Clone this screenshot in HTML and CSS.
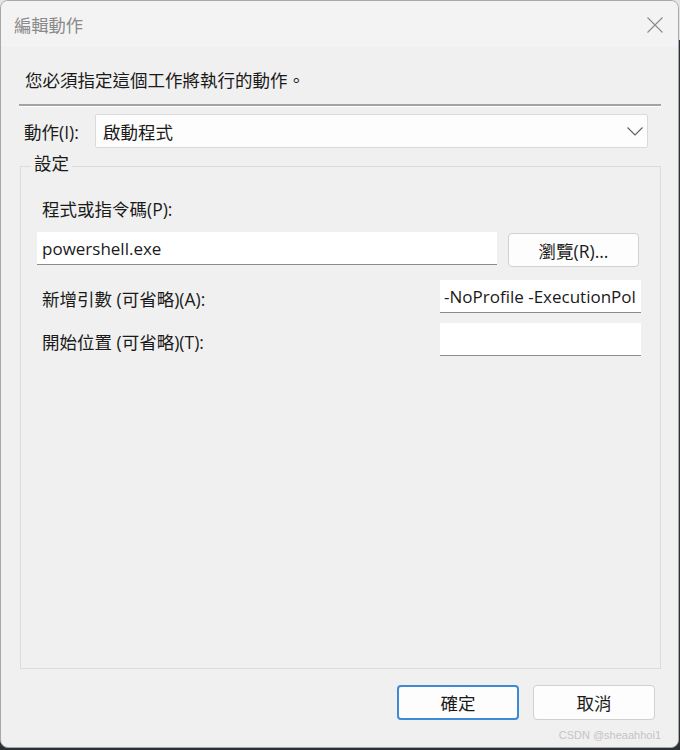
FILE: index.html
```html
<!DOCTYPE html>
<html lang="zh-Hant">
<head>
    <meta charset="UTF-8">
    <meta name="viewport" content="width=device-width, initial-scale=1.0">
    <title>編輯動作</title>
    <link rel="stylesheet" href="styles.css">
</head>
<body>
    <div class="window">
        <div class="title-bar">
            <span class="title">編輯動作</span>
            <svg class="close" width="16" height="16" viewBox="0 0 16 16">
                <path d="M0.5 0.5 L15.5 15.5 M15.5 0.5 L0.5 15.5" stroke="#8a8a8a" stroke-width="1.1" fill="none"/>
            </svg>
        </div>
        <div class="content">
            <div class="intro">您必須指定這個工作將執行的動作。</div>
            <div class="separator"></div>
            <div class="action-row">
                <span class="label">動作(I):</span>
                <div class="combo">
                    <span>啟動程式</span>
                    <svg width="16" height="9" viewBox="0 0 16 9">
                        <path d="M0.5 0.5 L8 8 L15.5 0.5" stroke="#5f5f5f" stroke-width="1.1" fill="none"/>
                    </svg>
                </div>
            </div>
            <fieldset class="group">
                <legend>設定</legend>
                <div class="field-label">程式或指令碼(P):</div>
                <div class="program-row">
                    <input class="textbox program" type="text" value="powershell.exe" readonly>
                    <button class="btn browse">瀏覽(R)...</button>
                </div>
                <div class="option-row first">
                    <span class="field-label">新增引數 (可省略)(A):</span>
                    <input class="textbox small" type="text" value="-NoProfile -ExecutionPolicy Bypass" readonly>
                </div>
                <div class="option-row">
                    <span class="field-label">開始位置 (可省略)(T):</span>
                    <input class="textbox small" type="text" value="" readonly>
                </div>
            </fieldset>
            <div class="dialog-buttons">
                <button class="btn primary">確定</button>
                <button class="btn">取消</button>
            </div>
            <div class="watermark">CSDN @sheaahhoi1</div>
        </div>
    </div>
</body>
</html>
```

FILE: styles.css
```css
body {
    margin: 0;
    width: 680px;
    height: 750px;
    background: linear-gradient(#e4e4e4 0 40px, #2d3035 40px);
    font-family: "Open Sans", "Noto Sans CJK TC", sans-serif;
    font-size: 17.5px;
    color: #1a1a1a;
}
.window {
    width: 679px;
    height: 748px;
    box-sizing: border-box;
    border: 1px solid #a8a8a8;
    border-radius: 8px;
    background-color: #f0f0f0;
    overflow: hidden;
}
.title-bar {
    height: 46px;
    display: flex;
    align-items: center;
    justify-content: space-between;
    padding: 0 15px 0 13px;
    background-color: #f3f3f3;
}
.title {
    color: #8a8a8a;
    font-family: "Noto Sans CJK TC", sans-serif;
    font-size: 17.3px;
}
.close {
    margin-top: 1px;
}
.content {
    padding: 0 17px 0 18px;
}
.intro {
    margin-top: 21px;
    padding-left: 6px;
    line-height: 24px;
    font-family: "Noto Sans CJK TC", sans-serif;
}
.separator {
    margin-top: 12px;
    height: 2px;
    background-color: #a3a3a3;
    border-bottom: 1px solid #ffffff;
}
.action-row {
    display: flex;
    align-items: center;
    margin-top: 7px;
    padding-left: 5px;
    padding-right: 13px;
}
.label {
    width: 71px;
}
.combo {
    flex: 1;
    height: 34px;
    box-sizing: border-box;
    display: flex;
    align-items: center;
    justify-content: space-between;
    padding: 0 4px 0 7px;
    background-color: #fdfdfd;
    border: 1px solid #dadada;
    border-radius: 2px;
}
.group {
    margin: 5px 0 0 1px;
    padding: 18px 18px 0 16px;
    height: 516px;
    box-sizing: border-box;
    border: 1px solid #dcdcdc;
}
.group legend {
    margin-left: -6px;
    padding: 0 3px 6px;
    line-height: 20px;
    font-family: "Noto Sans CJK TC", sans-serif;
}
.field-label {
    padding-left: 5px;
    line-height: 24px;
}
.program-row {
    display: flex;
    align-items: flex-start;
    gap: 11px;
    margin-top: 11px;
}
.textbox {
    height: 33px;
    box-sizing: border-box;
    margin: 0;
    padding: 0 5px;
    border: none;
    border-bottom: 1px solid #8c8c8c;
    border-radius: 0;
    outline: none;
    background-color: #ffffff;
    font-family: "Open Sans", sans-serif;
    font-size: 17px;
    color: #1a1a1a;
}
.program {
    width: 460px;
}
.small {
    width: 201px;
    padding-left: 4px;
}
.option-row {
    display: flex;
    align-items: center;
    justify-content: space-between;
    margin-top: 10px;
    margin-right: 1px;
}
.option-row.first {
    margin-top: 13px;
}
.option-row .field-label {
    margin-top: 5px;
}
.btn {
    height: 34px;
    box-sizing: border-box;
    border: 1px solid #d0d0d0;
    border-radius: 4px;
    background-color: #fdfdfd;
    font-family: inherit;
    font-size: 17.5px;
    color: #1a1a1a;
    padding: 0;
}
.browse {
    width: 131px;
    margin-top: 1px;
}
.dialog-buttons {
    display: flex;
    justify-content: flex-end;
    gap: 14px;
    margin-top: 16px;
    padding-right: 6px;
}
.dialog-buttons .btn {
    width: 122px;
    height: 35px;
}
.btn.primary {
    border: 2px solid #3d8bd6;
}
.watermark {
    margin-top: 7px;
    text-align: right;
    font-family: "Liberation Sans", sans-serif;
    font-size: 11px;
    color: #c4c4c4;
    line-height: 16px;
}
```
